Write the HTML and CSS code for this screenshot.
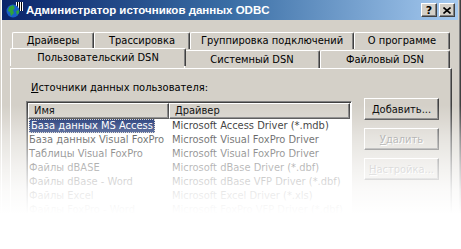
FILE: index.html
```html
<!DOCTYPE html>
<html lang="ru">
<head>
    <meta charset="UTF-8">
    <title>Администратор источников данных ODBC</title>
    <link rel="stylesheet" href="styles.css">
</head>
<body>
    <div class="window">
        <!-- Заголовок окна -->
        <div class="titlebar">
            <svg class="app-icon" width="18" height="16" viewBox="0 0 18 16">
                <rect x="11" y="0" width="7" height="9" fill="#fff"/>
                <rect x="12" y="0" width="1" height="9" fill="#000"/>
                <rect x="14" y="0" width="1" height="9" fill="#000"/>
                <rect x="16" y="0" width="1" height="9" fill="#000"/>
                <circle cx="8" cy="9" r="6.5" fill="#1a5fc8"/>
                <path d="M4 5 L8 3 L10 6 L8 8 L9 11 L6 14 L5 10 L3 9 Z" fill="#2fa33a"/>
                <path d="M11 9 L14 8 L14 11 L12 13 Z" fill="#2fa33a"/>
            </svg>
            <span class="title">Администратор источников данных ODBC</span>
            <div class="caption-buttons">
                <span class="cap-btn">?</span>
                <span class="cap-btn">
                    <svg width="8" height="7" viewBox="0 0 8 7"><path d="M0.5 0.5 L7.5 6.5 M7.5 0.5 L0.5 6.5" stroke="#000" stroke-width="1.6"/></svg>
                </span>
            </div>
        </div>

        <div class="client">
            <!-- Вкладки -->
            <div class="tab-row back">
                <div class="tab" style="width: 82px">Драйверы</div>
                <div class="tab" style="width: 96px">Трассировка</div>
                <div class="tab" style="width: 164px">Группировка подключений</div>
                <div class="tab" style="width: 96px">О программе</div>
            </div>
            <div class="tab-row front">
                <div class="tab selected" style="width: 176px">Пользовательский DSN</div>
                <div class="tab" style="width: 136px">Системный DSN</div>
                <div class="tab" style="width: 130px">Файловый DSN</div>
            </div>

            <div class="panel">
                <p class="caption"><u>И</u>сточники данных пользователя:</p>
                <div class="panel-body">
                    <div class="listview">
                        <div class="lv-header">
                            <div class="col-head name">Имя</div>
                            <div class="col-head driver">Драйвер</div>
                        </div>
                        <div class="lv-row">
                            <span class="cell name"><span class="sel">База данных MS Access</span></span>
                            <span class="cell">Microsoft Access Driver (*.mdb)</span>
                        </div>
                        <div class="lv-row">
                            <span class="cell name">База данных Visual FoxPro</span>
                            <span class="cell">Microsoft Visual FoxPro Driver</span>
                        </div>
                        <div class="lv-row">
                            <span class="cell name">Таблицы Visual FoxPro</span>
                            <span class="cell">Microsoft Visual FoxPro Driver</span>
                        </div>
                        <div class="lv-row">
                            <span class="cell name">Файлы dBASE</span>
                            <span class="cell">Microsoft dBase Driver (*.dbf)</span>
                        </div>
                        <div class="lv-row">
                            <span class="cell name">Файлы dBase - Word</span>
                            <span class="cell">Microsoft dBase VFP Driver (*.dbf)</span>
                        </div>
                        <div class="lv-row">
                            <span class="cell name">Файлы Excel</span>
                            <span class="cell">Microsoft Excel Driver (*.xls)</span>
                        </div>
                        <div class="lv-row">
                            <span class="cell name">Файлы FoxPro - Word</span>
                            <span class="cell">Microsoft FoxPro VFP Driver (*.dbf)</span>
                        </div>
                    </div>

                    <div class="buttons">
                        <button><u>Д</u>обавить...</button>
                        <button disabled><u>У</u>далить</button>
                        <button disabled><u>Н</u>астройка...</button>
                    </div>
                </div>
            </div>
        </div>
    </div>

    <!-- Затухание к низу -->
    <div class="fade"></div>
</body>
</html>
```

FILE: styles.css
```css
body {
    margin: 0;
    width: 461px;
    height: 249px;
    overflow: hidden;
    background: #fff;
    font-family: "DejaVu Sans Condensed", "DejaVu Sans", sans-serif;
    font-size: 11px;
    color: #000;
}
.window {
    width: 456px;
    height: 249px;
    overflow: hidden;
    background: #d4d0c8;
    border-left: 1px solid #d4d0c8;
    border-right: 1px solid #404040;
    box-shadow: inset 1px 0 #fff, inset -1px 0 #808080;
    padding: 0 2px 0 1px;
}
.titlebar {
    height: 20px;
    display: flex;
    align-items: center;
    background: linear-gradient(to right, #0a246a, #3a6ea5 50%, #a6caf0);
    color: #fff;
    padding: 0 3px;
}
.app-icon {
    flex: none;
    margin-right: 3px;
}
.title {
    font-family: "Liberation Sans", Arial, sans-serif;
    font-weight: bold;
    font-size: 11.5px;
    white-space: nowrap;
}
.caption-buttons {
    margin-left: auto;
    display: flex;
    gap: 2px;
}
.cap-btn {
    width: 14px;
    height: 12px;
    display: flex;
    align-items: center;
    justify-content: center;
    background: #d4d0c8;
    color: #000;
    font-family: "DejaVu Sans", sans-serif;
    font-weight: bold;
    font-size: 11px;
    border: 1px solid;
    border-color: #fff #404040 #404040 #fff;
    box-shadow: inset -1px -1px #808080;
}
.client {
    padding: 12px 0 0 8px;
}
.tab-row {
    display: flex;
    padding-left: 2px;
    height: 18px;
}
.tab {
    height: 17px;
    flex: none;
    box-sizing: border-box;
    text-align: center;
    line-height: 16px;
    white-space: nowrap;
    border-top: 1px solid #fff;
    border-left: 1px solid #fff;
    border-right: 1px solid #404040;
    border-radius: 2px 2px 0 0;
    box-shadow: inset -1px 0 #808080;
    background: #d4d0c8;
}
.tab-row.front .tab {
    height: 18px;
    line-height: 17px;
}
.tab.selected {
    position: relative;
    z-index: 2;
    height: 21px;
    line-height: 19px;
    margin: -2px -2px 0 -2px;
}
.panel {
    height: 200px;
    width: 442px;
    box-sizing: border-box;
    border-top: 1px solid #fff;
    border-left: 1px solid #fff;
    border-right: 1px solid #404040;
    box-shadow: inset -1px 0 #808080;
    padding: 12px 0 0 15px;
}
.caption {
    margin: 0 0 6px 5px;
    height: 14px;
    line-height: 14px;
}
.panel-body {
    display: flex;
    gap: 12px;
    align-items: flex-start;
}
.listview {
    width: 326px;
    height: 140px;
    box-sizing: border-box;
    background: #fff;
    border: 1px solid;
    border-color: #808080 #fff #fff #808080;
    box-shadow: inset 1px 1px #404040;
    padding: 1px 0 0 1px;
}
.lv-header {
    display: flex;
    height: 16px;
}
.col-head {
    box-sizing: border-box;
    height: 16px;
    line-height: 14px;
    padding-left: 5px;
    background: #d4d0c8;
    border: 1px solid;
    border-color: #fff #404040 #404040 #fff;
    box-shadow: inset -1px -1px #808080;
}
.col-head.name {
    width: 141px;
}
.col-head.driver {
    width: 181px;
}
.lv-row {
    display: flex;
    height: 14px;
    line-height: 14px;
    white-space: nowrap;
}
.cell {
    padding-left: 3px;
}
.cell.name {
    width: 140px;
    padding-left: 1px;
    flex: none;
}
.sel {
    display: inline-block;
    background: #0a246a;
    color: #fff;
    padding: 0 2px;
    outline: 1px dotted #d4d0c8;
    outline-offset: -1px;
}
.buttons {
    display: flex;
    flex-direction: column;
    gap: 8px;
    margin-top: -3px;
}
.buttons button {
    width: 75px;
    height: 22px;
    font: inherit;
    background: #d4d0c8;
    color: #000;
    border: 1px solid;
    border-color: #fff #404040 #404040 #fff;
    box-shadow: inset -1px -1px #808080;
    padding: 0;
}
.buttons button:disabled {
    color: #808080;
    text-shadow: 1px 1px #fff;
}
.fade {
    position: absolute;
    left: 0;
    top: 0;
    width: 461px;
    height: 249px;
    pointer-events: none;
    background: linear-gradient(to bottom,
        rgba(255, 255, 255, 0) 105px,
        rgba(255, 255, 255, 0.22) 123px,
        rgba(255, 255, 255, 0.42) 137px,
        rgba(255, 255, 255, 0.7) 165px,
        rgba(255, 255, 255, 0.9) 190px,
        #fff 214px);
}
```
